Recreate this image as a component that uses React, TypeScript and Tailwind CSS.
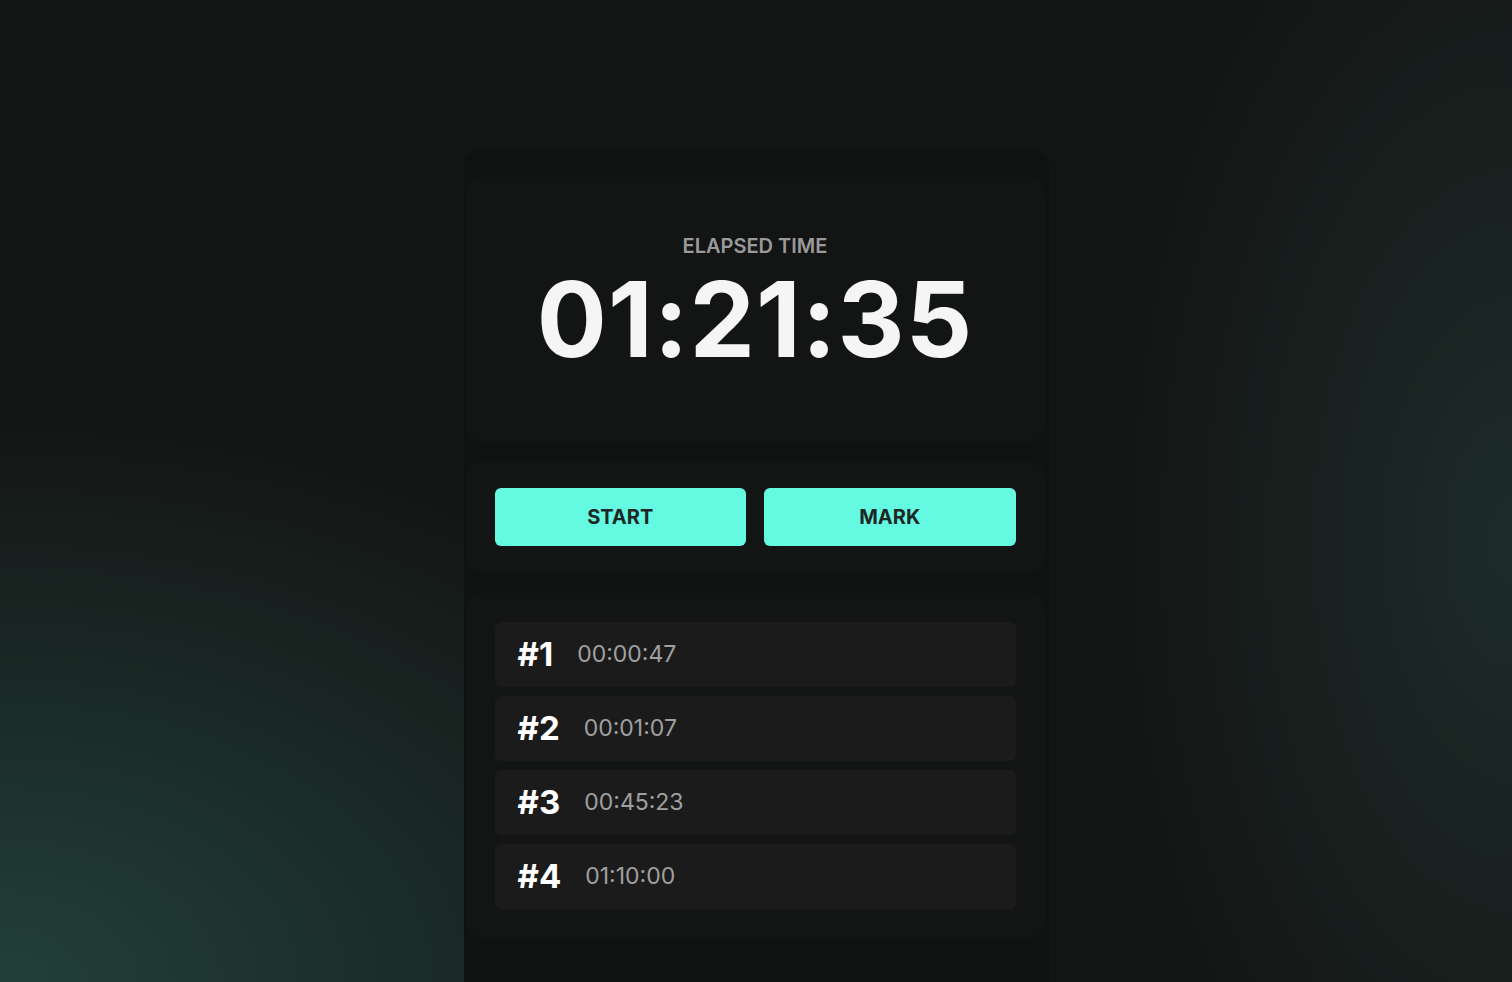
const marks = [
  { id: 1, time: "00:00:47" },
  { id: 2, time: "00:01:07" },
  { id: 3, time: "00:45:23" },
  { id: 4, time: "01:10:00" },
];

export default function App() {
  return (
    <div className="min-h-screen bg-[#131414] bg-[radial-gradient(ellipse_at_0%_100%,#224039_0%,transparent_42%),radial-gradient(28%_80%_at_100%_55%,#1d2c29_0%,transparent_100%)] font-['Inter',sans-serif] overflow-hidden">
      <div className="h-[150px]" />
      <main className="mx-auto w-[585px] min-h-[832px] rounded-t-2xl bg-[#101111] pl-[2px] pr-[4px] pt-[27px] flex flex-col gap-[19px]">
        <section className="rounded-2xl bg-[#131414] pt-[59px] pb-[71px] flex flex-col items-center">
          <p className="text-[20px] leading-5 font-semibold text-[#9a9a9a]">
            ELAPSED TIME
          </p>
          <p className="mt-[11px] text-[104px] leading-[104px] font-bold tracking-[1px] text-[#f5f5f5]">
            01:21:35
          </p>
        </section>

        <section className="rounded-2xl bg-[#131414] px-[29px] py-[27px] grid grid-cols-2 gap-[18px]">
          <button className="h-[58px] rounded-md bg-[#64fae1] text-[20px] font-bold text-[#1e2726]">
            START
          </button>
          <button className="h-[58px] rounded-md bg-[#64fae1] text-[20px] font-bold text-[#1e2726]">
            MARK
          </button>
        </section>

        <section className="mt-px rounded-2xl bg-[#131414] p-[29px] flex flex-col gap-[9px]">
          {marks.map((m) => (
            <div
              key={m.id}
              className="h-[65px] rounded-md bg-[#1b1b1b] pl-[23px] flex items-center gap-6"
            >
              <span className="text-[33px] font-bold text-white">#{m.id}</span>
              <span className="text-[23px] text-[#a0a0a0]">{m.time}</span>
            </div>
          ))}
        </section>
      </main>
    </div>
  );
}
